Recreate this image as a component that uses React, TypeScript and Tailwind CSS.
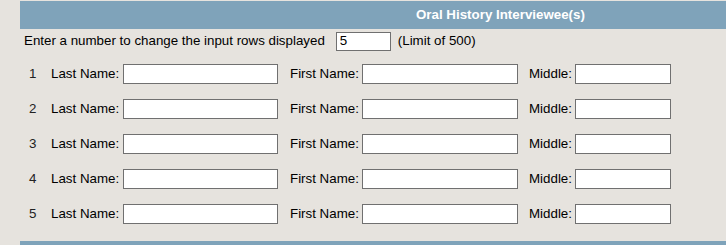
const rows = [1, 2, 3, 4, 5];

function NameRow({ n }: { n: number }) {
  return (
    <div className="flex items-center h-[35px]">
      <span className="w-[31px] pl-[9px] text-[#222]">{n}</span>
      <span className="w-[72px]">Last Name:</span>
      <input type="text" className="w-[155px] h-[20px] bg-white border border-[#707070] outline-none" />
      <span className="w-[84px] pl-[12px]">First Name:</span>
      <input type="text" className="w-[156px] h-[20px] bg-white border border-[#707070] outline-none" />
      <span className="w-[57px] pl-[11px]">Middle:</span>
      <input type="text" className="w-[96px] h-[20px] bg-white border border-[#707070] outline-none" />
    </div>
  );
}

export default function App() {
  return (
    <div className="w-[726px] h-[245px] overflow-hidden bg-[#e6e3de] text-[13.33px] text-black" style={{ fontFamily: '"Liberation Sans", Arial, sans-serif' }}>
      <div className="pt-[1px] pl-[20px]">
        <div className="h-[28px] bg-[#7fa3ba] flex items-center pl-[396px] text-white font-bold">
          Oral History Interviewee(s)
        </div>
        <div className="flex items-center h-[24px] pl-[4px]">
          <span>Enter a number to change the input rows displayed</span>
          <input type="text" defaultValue="5" className="ml-[11px] w-[55px] h-[19px] bg-white border border-[#707070] px-[3px] outline-none" />
          <span className="ml-[7px]">(Limit of 500)</span>
        </div>
        <div className="mt-[3px]">
          {rows.map((n) => (
            <NameRow key={n} n={n} />
          ))}
        </div>
        <div className="mt-[10px] h-[6px] bg-[#7fa3ba]" />
      </div>
    </div>
  );
}
